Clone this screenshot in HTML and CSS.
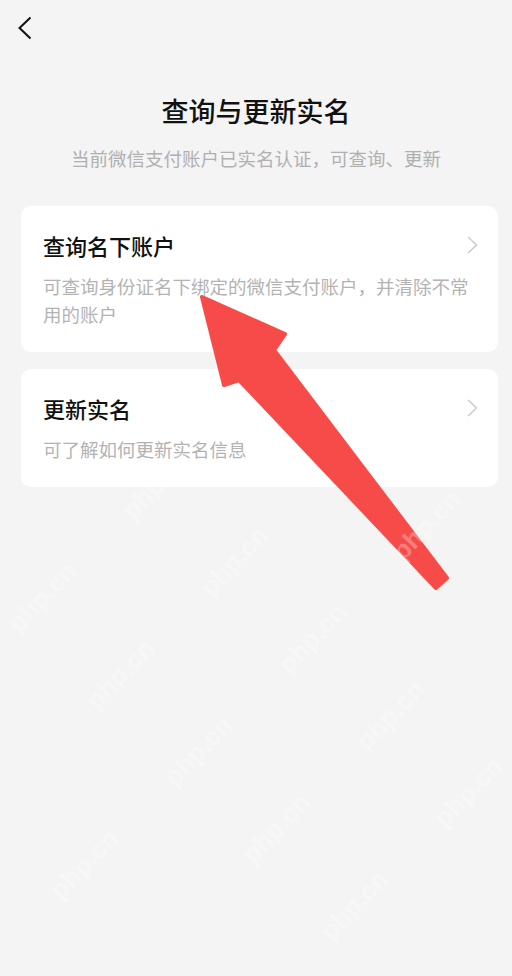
FILE: index.html
```html
<!DOCTYPE html>
<html lang="zh-CN">
<head>
    <meta charset="UTF-8">
    <meta name="viewport" content="width=device-width, initial-scale=1.0">
    <title>查询与更新实名</title>
    <link rel="stylesheet" href="styles.css">
</head>
<body>
    <div class="page">
        <div class="nav-bar">
            <svg class="back-btn" width="14" height="24" viewBox="0 0 14 24">
                <polyline points="12.5,1.5 1.5,12 12.5,22.5" fill="none" stroke="#111" stroke-width="2" stroke-linejoin="miter"/>
            </svg>
        </div>

        <div class="header">
            <h1 class="page-title">查询与更新实名</h1>
            <p class="page-desc">当前微信支付账户已实名认证，可查询、更新</p>
        </div>

        <div class="card-list">
            <div class="card">
                <div class="card-head">
                    <div class="card-title">查询名下账户</div>
                    <svg class="chevron" width="11" height="18" viewBox="0 0 11 18">
                        <polyline points="1,1 9.5,9 1,17" fill="none" stroke="#c9c9c9" stroke-width="1.4"/>
                    </svg>
                </div>
                <div class="card-desc">可查询身份证名下绑定的微信支付账户，并清除不常用的账户</div>
            </div>
            <div class="card">
                <div class="card-head">
                    <div class="card-title">更新实名</div>
                    <svg class="chevron" width="11" height="18" viewBox="0 0 11 18">
                        <polyline points="1,1 9.5,9 1,17" fill="none" stroke="#c9c9c9" stroke-width="1.4"/>
                    </svg>
                </div>
                <div class="card-desc">可了解如何更新实名信息</div>
            </div>
        </div>

        <!-- red pointer drawn on top of the page -->
        <svg class="pointer" width="512" height="976" viewBox="0 0 512 976">
            <polygon points="202,297 285,334 274,350 447,578 436,588 239,380 224,385"
                     fill="#f64b48" stroke="#f64b48" stroke-width="4" stroke-linejoin="round"/>
        </svg>

        <div class="watermarks" id="watermarks"></div>
    </div>

    <script src="script.js"></script>
</body>
</html>
```

FILE: styles.css
```css
* {
    box-sizing: border-box;
}
body {
    margin: 0;
    background-color: #f4f4f4;
    font-family: "Noto Sans CJK SC", "Noto Sans", sans-serif;
    color: #111;
}
.page {
    position: relative;
    width: 512px;
    height: 976px;
    overflow: hidden;
}
.nav-bar {
    height: 56px;
    display: flex;
    align-items: center;
    padding-left: 18px;
}
.back-btn {
    display: block;
}
.header {
    text-align: center;
    padding-top: 36px;
}
.page-title {
    margin: 0;
    font-size: 27px;
    line-height: 37px;
    font-weight: 500;
    color: #111;
}
.page-desc {
    margin: 16px 0 0;
    font-size: 18.5px;
    line-height: 26px;
    color: #b0b0b0;
}
.card-list {
    display: flex;
    flex-direction: column;
    gap: 17px;
    padding: 35px 14px 0 21px;
}
.card {
    background: white;
    border-radius: 10px;
    padding: 24px 20px 24px 22px;
}
.card-head {
    display: flex;
    justify-content: space-between;
    align-items: center;
}
.card-title {
    font-size: 22px;
    line-height: 30px;
    font-weight: 500;
    color: #111;
}
.chevron {
    display: block;
}
.card-desc {
    margin-top: 12px;
    font-size: 18.5px;
    line-height: 28px;
    color: #b3b3b3;
}
.pointer {
    position: absolute;
    top: 0;
    left: 0;
    pointer-events: none;
}
.watermarks {
    position: absolute;
    inset: 0;
    pointer-events: none;
}
.wm {
    position: absolute;
    font-family: "Liberation Sans", Arial, sans-serif;
    font-weight: bold;
    font-size: 26px;
    line-height: 1;
    color: rgba(255, 255, 255, 0.3);
    white-space: nowrap;
    transform: translate(-50%, -50%) rotate(-46deg);
}
```

FILE: script.js
```javascript
// tiled "php.cn" marks over the lower half of the page
const layer = document.getElementById('watermarks');
const origin = { x: 42, y: 597 };
const rowStep = { x: 78, y: 77 };
const colStep = { x: 114, y: -113 };

for (let i = -12; i <= 12; i++) {
    for (let j = -12; j <= 12; j++) {
        const x = origin.x + i * rowStep.x + j * colStep.x;
        const y = origin.y + i * rowStep.y + j * colStep.y;
        if (x < 34 || x > 478 || y < 460 || y > 940) continue;
        const span = document.createElement('span');
        span.className = 'wm';
        span.textContent = 'php.cn';
        span.style.left = x + 'px';
        span.style.top = y + 'px';
        layer.appendChild(span);
    }
}
```
